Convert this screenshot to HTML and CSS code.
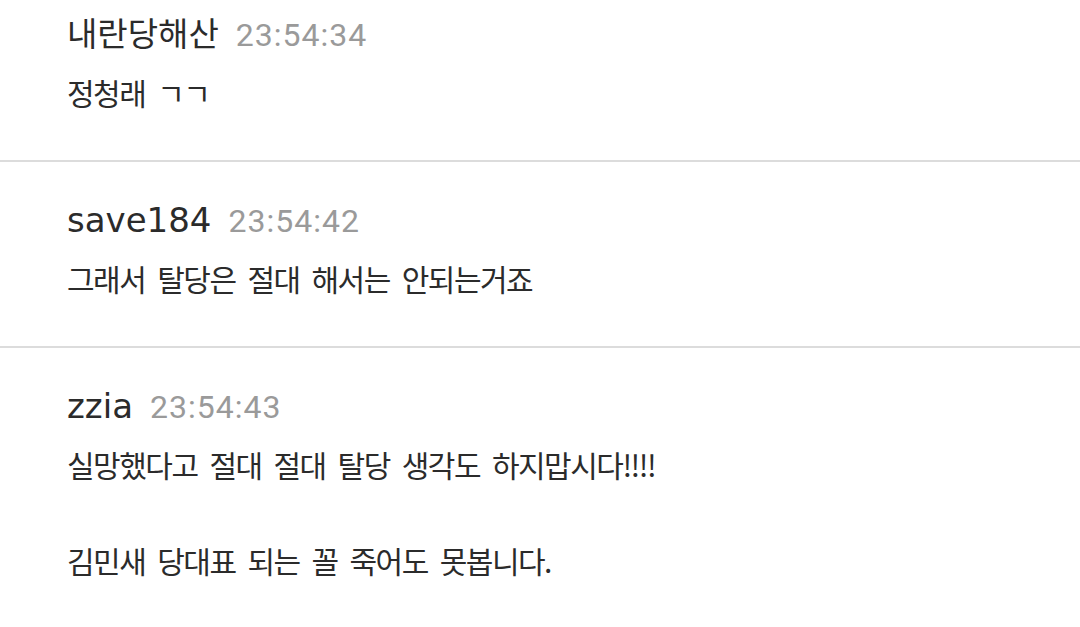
FILE: index.html
```html
<!DOCTYPE html>
<html lang="ko">
<head>
<meta charset="utf-8">
<title>댓글</title>
<link rel="stylesheet" href="styles.css">
</head>
<body>
<ul class="comments">
  <li class="comment">
    <div class="head"><span class="name">내란당해산</span><span class="time">23:54:34</span></div>
    <p class="msg">정청래 ㄱㄱ</p>
  </li>
  <li class="comment">
    <div class="head"><span class="name name--latin">save184</span><span class="time">23:54:42</span></div>
    <p class="msg">그래서 탈당은 절대 해서는 안되는거죠</p>
  </li>
  <li class="comment">
    <div class="head"><span class="name name--latin">zzia</span><span class="time">23:54:43</span></div>
    <p class="msg">실망했다고 절대 절대 탈당 생각도 하지맙시다!!!!<br><br>김민새 당대표 되는 꼴 죽어도 못봅니다.</p>
  </li>
</ul>
</body>
</html>
```

FILE: styles.css
```css
html, body {
  margin: 0;
  padding: 0;
  background: #ffffff;
  overflow: hidden;
}

body {
  font-family: "Noto Sans CJK KR", "Noto Sans", sans-serif;
  color: #2b2b2b;
}

.comments {
  list-style: none;
  margin: -24px 0 0 0;
  padding: 0;
}

.comment {
  padding: 34px 0 44px 67px;
  border-bottom: 2px solid #dcdcdc;
}

.head {
  height: 44px;
  font-size: 33px;
  line-height: 44px;
  white-space: nowrap;
}

.name {
  font-weight: 400;
  color: #2b2b2b;
}

.name--latin {
  font-family: "DejaVu Sans", sans-serif;
  font-size: 34px;
  line-height: 1;
}

.time {
  margin-left: 17px;
  font-family: Roboto, "Liberation Sans", sans-serif;
  font-size: 32px;
  font-weight: 400;
  line-height: 1;
  letter-spacing: 1px;
  color: #9a9a9a;
}

.msg {
  margin: 14px 0 0 0;
  font-size: 30px;
  font-weight: 400;
  line-height: 48px;
  letter-spacing: -1.5px;
  word-spacing: 5px;
  color: #2b2b2b;
}
```
